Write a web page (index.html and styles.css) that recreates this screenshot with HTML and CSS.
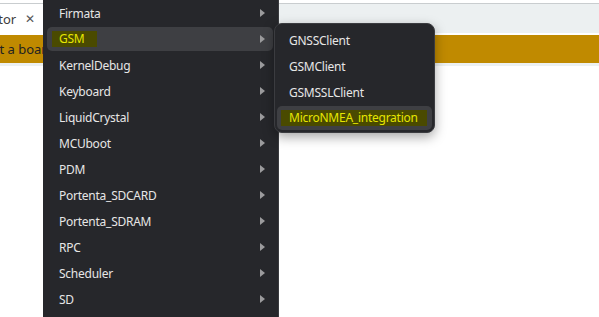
FILE: index.html
```html
<!DOCTYPE html>
<html lang="en">
<head>
  <meta charset="UTF-8" />
  <title>Include Library</title>
  <link rel="stylesheet" href="styles.css">
</head>
<body>
  <div class="tabbar">
    <div class="tab">
      <span class="tab-name">Serial Monitor</span>
      <span class="tab-close">&#x2715;</span>
    </div>
  </div>
  <div class="notice"><span>Select a board</span></div>

  <ul class="menu main-menu">
    <li class="item"><span>Firmata</span><i class="arrow"></i></li>
    <li class="item active"><span class="match match-short">GSM</span><i class="arrow"></i></li>
    <li class="item"><span>KernelDebug</span><i class="arrow"></i></li>
    <li class="item"><span>Keyboard</span><i class="arrow"></i></li>
    <li class="item"><span>LiquidCrystal</span><i class="arrow"></i></li>
    <li class="item"><span>MCUboot</span><i class="arrow"></i></li>
    <li class="item"><span>PDM</span><i class="arrow"></i></li>
    <li class="item"><span>Portenta_SDCARD</span><i class="arrow"></i></li>
    <li class="item"><span>Portenta_SDRAM</span><i class="arrow"></i></li>
    <li class="item"><span>RPC</span><i class="arrow"></i></li>
    <li class="item"><span>Scheduler</span><i class="arrow"></i></li>
    <li class="item"><span>SD</span><i class="arrow"></i></li>
  </ul>

  <ul class="menu sub-menu">
    <li class="item"><span>GNSSClient</span></li>
    <li class="item"><span>GSMClient</span></li>
    <li class="item"><span>GSMSSLClient</span></li>
    <li class="item active"><span class="match">MicroNMEA_integration</span></li>
  </ul>
</body>
</html>
```

FILE: styles.css
```css
body {
  margin: 0;
  font-family: "Noto Sans", "Open Sans", sans-serif;
  font-size: 12px;
  letter-spacing: -0.25px;
  background: #fff;
  overflow: hidden;
  height: 317px;
}
.tabbar {
  margin-top: 3px;
  border-top: 1px solid #c9cdcf;
  height: 29px;
  background: #ecf0f1;
  display: flex;
}
.tab {
  background: #fff;
  display: flex;
  align-items: center;
  gap: 9px;
  margin-left: -70px;
  padding-right: 60px;
  color: #3c3c3c;
  font-size: 13px;
  letter-spacing: 0;
}
.tab-close {
  font-size: 12px;
  color: #555;
}
.notice {
  margin-top: 2px;
  height: 28px;
  background: #c08a00;
  border-bottom: 3px solid #ecf0f1;
  display: flex;
  align-items: center;
  color: #222;
  font-size: 13px;
  letter-spacing: 0;
}
.notice span {
  margin-left: -32px;
}
.menu {
  list-style: none;
  margin: 0;
  position: absolute;
  background: #26272b;
  color: #e6e6e6;
  display: flex;
  flex-direction: column;
  gap: 2px;
}
.main-menu {
  left: 43px;
  top: 0;
  width: 226px;
  height: 317px;
  padding: 1px 5px 0 4px;
  border-right: 1px solid #3a3b3f;
}
.sub-menu {
  left: 274px;
  top: 23px;
  width: 155px;
  padding: 4px 2px 2px 2px;
  border: 1px solid #3b3c40;
  border-radius: 8px;
  box-shadow: 0 4px 12px rgba(0, 0, 0, 0.35);
}
.item {
  height: 24px;
  flex-shrink: 0;
  display: flex;
  align-items: center;
  justify-content: space-between;
  padding: 0 8px 0 12px;
  border-radius: 5px;
}
.item.active {
  background: #3e3f43;
}
.match {
  background: #4a4a00;
  color: #e6e600;
  line-height: 16px;
  margin-left: -8px;
  padding: 0 9px 0 8px;
}
.match-short {
  margin-left: -7px;
  padding: 0 13px 0 7px;
}
.arrow {
  width: 0;
  height: 0;
  border-top: 4px solid transparent;
  border-bottom: 4px solid transparent;
  border-left: 5px solid #9b9b9d;
}
```
